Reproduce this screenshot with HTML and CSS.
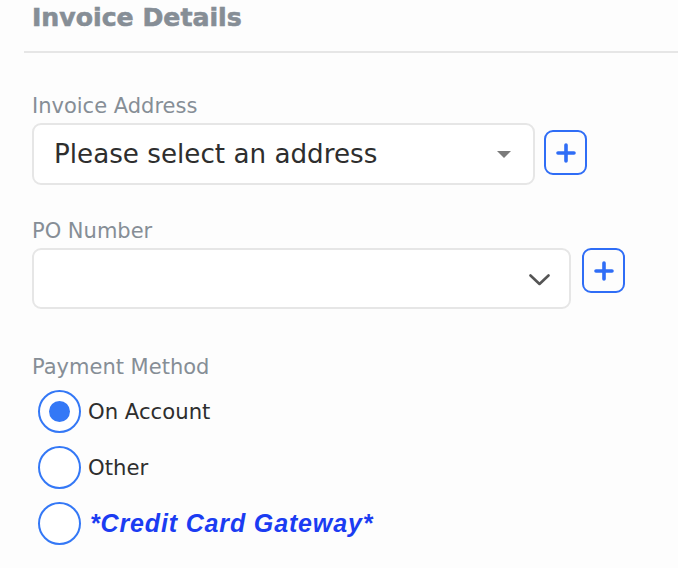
FILE: index.html
```html
<!DOCTYPE html>
<html>
<head>
<meta charset="utf-8">
<link rel="stylesheet" href="styles.css">
</head>
<body>
<div class="panel">
  <h2 class="heading">Invoice Details</h2>
  <div class="divider"></div>
  <div class="form">
    <div class="label label-first">Invoice Address</div>
    <div class="field-row">
      <div class="select select-address">
        <span class="select-text">Please select an address</span>
        <svg class="caret" width="14" height="7" viewBox="0 0 14 7"><path d="M0 0 H14 L7 7 Z" fill="#7b7b7b"/></svg>
      </div>
      <div class="add-btn add-btn-offset">
        <svg width="20" height="20" viewBox="0 0 20 20"><path d="M10 2 V18 M2 10 H18" stroke="#2f6df6" stroke-width="3.6" stroke-linecap="round" fill="none"/></svg>
      </div>
    </div>

    <div class="label label-next">PO Number</div>
    <div class="field-row">
      <div class="select select-po">
        <span class="select-text"></span>
        <svg class="chevron" width="21" height="12" viewBox="0 0 21 12"><path d="M1.5 1.5 L10.5 10 L19.5 1.5" stroke="#555" stroke-width="2.6" stroke-linecap="round" stroke-linejoin="round" fill="none"/></svg>
      </div>
      <div class="add-btn">
        <svg width="20" height="20" viewBox="0 0 20 20"><path d="M10 2 V18 M2 10 H18" stroke="#2f6df6" stroke-width="3.6" stroke-linecap="round" fill="none"/></svg>
      </div>
    </div>

    <div class="label label-payment">Payment Method</div>
    <div class="radios">
      <div class="radio-row">
        <span class="radio radio-checked"><span class="dot"></span></span>
        <span class="radio-label">On Account</span>
      </div>
      <div class="radio-row">
        <span class="radio"></span>
        <span class="radio-label">Other</span>
      </div>
      <div class="radio-row">
        <span class="radio"></span>
        <span class="radio-label gateway">*Credit Card Gateway*</span>
      </div>
    </div>
  </div>
</div>
</body>
</html>
```
FILE: styles.css
```css
html, body {
  margin: 0;
  padding: 0;
  background: #fdfdfd;
}
body {
  font-family: "DejaVu Sans", Verdana, sans-serif;
  color: #2e2e2e;
}
.panel {
  padding-left: 24px;
}
.heading {
  margin: 0;
  padding: 3px 0 0 8px;
  font-size: 25.2px;
  line-height: 30px;
  font-weight: bold;
  color: #868e96;
  -webkit-text-stroke: 0.6px #868e96;
}
.divider {
  margin-top: 18px;
  height: 2px;
  background: #e6e6e6;
}
.form {
  padding-left: 8px;
}
.label {
  font-size: 21px;
  line-height: 24px;
  color: #868e96;
  margin-bottom: 5px;
}
.label-first {
  margin-top: 41px;
}
.label-next {
  margin-top: 34px;
}
.label-payment {
  margin-top: 46px;
  margin-bottom: 11px;
}
.field-row {
  display: flex;
  align-items: flex-start;
}
.select {
  box-sizing: border-box;
  display: flex;
  align-items: center;
  justify-content: space-between;
  background: #fff;
  border: 2px solid #e6e6e6;
  border-radius: 9px;
  padding: 0 22px 0 20px;
}
.select-address {
  width: 503px;
  height: 62px;
  margin-right: 9px;
}
.select-po {
  width: 539px;
  height: 61px;
  margin-right: 11px;
  padding-right: 19px;
}
.select-text {
  font-size: 26.2px;
  color: #2e2e2e;
}
.caret {
  display: block;
}
.chevron {
  display: block;
  margin-top: 3px;
}
.add-btn {
  box-sizing: border-box;
  width: 43px;
  height: 45px;
  border: 2px solid #2f6df6;
  border-radius: 9px;
  display: flex;
  align-items: center;
  justify-content: center;
}
.add-btn-offset {
  margin-top: 7px;
}
.radios {
  display: flex;
  flex-direction: column;
  gap: 13px;
  padding-left: 6px;
}
.radio-row {
  display: flex;
  align-items: center;
  gap: 7px;
}
.radio {
  box-sizing: border-box;
  width: 43px;
  height: 43px;
  border: 2px solid #3478f6;
  border-radius: 50%;
  background: #fff;
  display: flex;
  align-items: center;
  justify-content: center;
}
.dot {
  width: 21px;
  height: 21px;
  border-radius: 50%;
  background: #3478f6;
}
.radio-label {
  font-size: 21.2px;
  color: #2e2e2e;
}
.gateway {
  font-family: "Liberation Sans", Arial, sans-serif;
  font-weight: bold;
  font-style: italic;
  font-size: 25px;
  letter-spacing: 0.85px;
  color: #1b3cf2;
  margin-left: 2px;
}
```
